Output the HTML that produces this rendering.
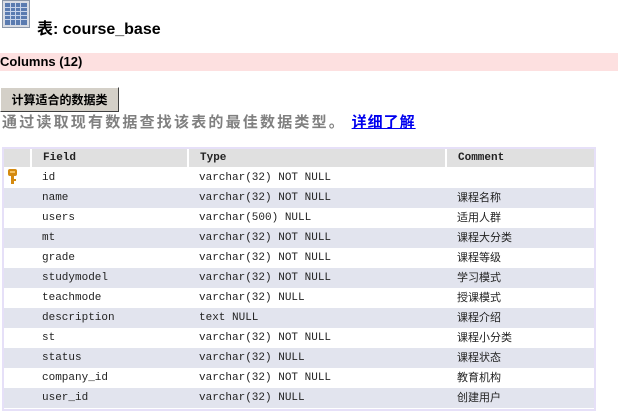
<!DOCTYPE html>
<html><head><meta charset="utf-8"><style>
body{margin:0;width:618px;height:411px;background:#fff;position:relative;overflow:hidden;font-family:"Liberation Sans","Noto Sans CJK SC",sans-serif}
.abs{position:absolute}
.title{left:37px;top:15px;font-size:16px;font-weight:bold;color:#000}
.cols{left:0;top:53px;width:618px;height:18px;background:#fde0e0;font-size:13px;font-weight:bold;line-height:18px}
.btn{left:0;top:87px;width:117px;height:23px;background:#d4d0c8;border:1px solid #fff;border-right-color:#404040;border-bottom-color:#404040;font-size:12px;font-weight:bold;line-height:23px;text-align:center;font-family:"Noto Sans CJK SC",sans-serif}
.desc{left:2px;top:112px;font-size:15px;font-weight:bold;color:#808080;letter-spacing:2.2px;font-family:"Noto Sans CJK SC",sans-serif;line-height:20px;white-space:nowrap}
.desc a{color:#0000ee;text-decoration:underline;letter-spacing:1px}
.tbl{left:2px;top:147px;width:590px;height:260px;border:2px solid #e6e0f8;background:#fff}
table{border-collapse:collapse;margin-left:0;font-family:"Liberation Mono","Noto Sans CJK SC",monospace;font-size:11px;color:#222;table-layout:fixed}
td,th{height:20px;line-height:20px;padding:0 0 0 11px;text-align:left;white-space:nowrap;overflow:hidden;vertical-align:middle}
th{background:#e0e0e0;height:18px;line-height:18px;font-weight:bold;border-left:2px solid #fff;border-right:0;border-bottom:1px solid #fff}
tr.o td{background:#e2e4ee}
td.c{font-family:"Noto Sans CJK SC",sans-serif;font-size:11px;line-height:20px}
td.c span{display:block;height:20px;line-height:20px;position:relative;top:-1px}
</style></head><body>
<svg class="abs" style="left:2px;top:0" width="28" height="28" viewBox="0 0 28 28">
<rect x="0.5" y="0.5" width="27" height="27" fill="#d8dce4" stroke="#8a96a8"/>
<rect x="3" y="3" width="22" height="22" fill="#5a7bb0"/>
<g stroke="#c8d4ea" stroke-width="1">
<line x1="3" y1="7.5" x2="25" y2="7.5"/><line x1="3" y1="11.5" x2="25" y2="11.5"/><line x1="3" y1="15.5" x2="25" y2="15.5"/><line x1="3" y1="19.5" x2="25" y2="19.5"/>
<line x1="8.5" y1="3" x2="8.5" y2="25"/><line x1="13.5" y1="3" x2="13.5" y2="25"/><line x1="18.5" y1="3" x2="18.5" y2="25"/>
</g></svg>
<div class="abs title">表: course_base</div>
<div class="abs cols">Columns (12)</div>
<div class="abs btn">计算适合的数据类</div>
<div class="abs desc">通过读取现有数据查找该表的最佳数据类型。 <a>详细了解</a></div>
<div class="abs tbl">
<table>
<colgroup><col style="width:27px"><col style="width:157px"><col style="width:258px"><col style="width:148px"></colgroup>
<tr><th style="border-left:0"></th><th>Field</th><th>Type</th><th>Comment</th></tr>
<tr><td style="padding-left:3px"><svg width="11" height="16" viewBox="0 0 11 16" style="vertical-align:middle"><rect x="1" y="0" width="9" height="7" rx="2" fill="#d48a10"/><rect x="3" y="2" width="5" height="2" fill="#f4c060"/><rect x="4" y="7" width="3" height="8" fill="#d48a10"/><rect x="7" y="10" width="2" height="2" fill="#d48a10"/></svg></td><td>id</td><td>varchar(32) NOT NULL</td><td class="c"></td></tr>
<tr class="o"><td></td><td>name</td><td>varchar(32) NOT NULL</td><td class="c"><span>课程名称</span></td></tr>
<tr><td></td><td>users</td><td>varchar(500) NULL</td><td class="c"><span>适用人群</span></td></tr>
<tr class="o"><td></td><td>mt</td><td>varchar(32) NOT NULL</td><td class="c"><span>课程大分类</span></td></tr>
<tr><td></td><td>grade</td><td>varchar(32) NOT NULL</td><td class="c"><span>课程等级</span></td></tr>
<tr class="o"><td></td><td>studymodel</td><td>varchar(32) NOT NULL</td><td class="c"><span>学习模式</span></td></tr>
<tr><td></td><td>teachmode</td><td>varchar(32) NULL</td><td class="c"><span>授课模式</span></td></tr>
<tr class="o"><td></td><td>description</td><td>text NULL</td><td class="c"><span>课程介绍</span></td></tr>
<tr><td></td><td>st</td><td>varchar(32) NOT NULL</td><td class="c"><span>课程小分类</span></td></tr>
<tr class="o"><td></td><td>status</td><td>varchar(32) NULL</td><td class="c"><span>课程状态</span></td></tr>
<tr><td></td><td>company_id</td><td>varchar(32) NOT NULL</td><td class="c"><span>教育机构</span></td></tr>
<tr class="o"><td></td><td>user_id</td><td>varchar(32) NULL</td><td class="c"><span>创建用户</span></td></tr>
</table></div>
</body></html>
